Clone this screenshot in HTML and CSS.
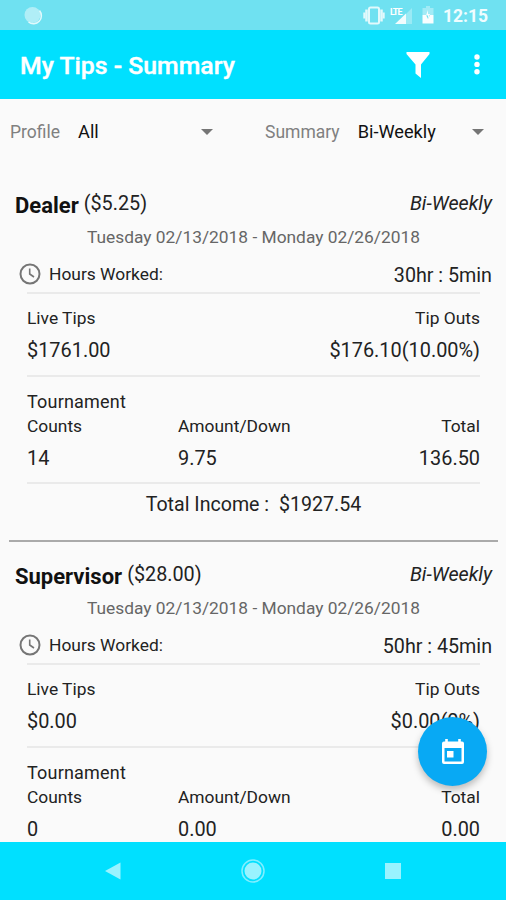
FILE: index.html
```html
<!DOCTYPE html>
<html lang="en">
<head>
  <meta charset="UTF-8" />
  <meta name="viewport" content="width=device-width, initial-scale=1.0" />
  <title>My Tips - Summary</title>
  <link rel="stylesheet" href="styles.css">
</head>
<body>
  <div class="screen">
    <div class="status-bar">
      <svg class="status-sync" width="20" height="20" viewBox="0 0 20 20">
        <circle cx="9.500" cy="9" r="8" fill="#fff" fill-opacity=".45" />
        <path d="M16.500 4.500A8 8 0 0 1 5.500 16" fill="none" stroke="#fff" stroke-opacity=".8" stroke-width="1.500" />
      </svg>
      <div class="status-icons">
        <svg width="22" height="20" viewBox="0 0 22 20" fill="none" stroke="#fff" stroke-opacity=".8">
          <rect x="6" y="1.500" width="10" height="16" rx="1.500" stroke-width="2" />
          <path d="M3.500 3.500v12M18.500 3.500v12" stroke-width="2.500" />
          <path d="M1.300 6.500v6M20.700 6.500v6" stroke-width="2" />
        </svg>
        <svg class="signal" width="24" height="20" viewBox="0 0 24 20" fill="#fff">
          <path d="M22 2v16h-6V8z" fill-opacity=".3" />
          <path d="M16 7.500V18H5z" fill-opacity=".9" />
          <text class="lte" x="0" y="8.500">LTE</text>
        </svg>
        <svg class="battery" width="12" height="19" viewBox="0 0 12 19" fill="#fff">
          <path d="M4 0h4v2h3.500v7H.5V2H4z" fill-opacity=".35" />
          <path d="M.5 9H4l2 4 2-4h3.500v8.500H.5z" fill-opacity=".95" />
          <path d="M6 4L4 9.500h2V13l2-5H6z" fill-opacity=".9" />
        </svg>
        <span class="clock">12:15</span>
      </div>
    </div>

    <div class="app-bar">
      <h1>My Tips - Summary</h1>
      <svg class="filter" width="24" height="26" viewBox="0 0 24 26" fill="#fff">
        <path d="M.5 0h23v2L15 12.500V26l-5.500-4.500v-9L.5 2z" />
      </svg>
      <svg class="more" width="8" height="22" viewBox="0 0 8 22" fill="#fff">
        <circle cx="4" cy="3" r="2.700" />
        <circle cx="4" cy="10.400" r="2.700" />
        <circle cx="4" cy="17.800" r="2.700" />
      </svg>
    </div>

    <div class="filters">
      <div class="select profile">
        <span class="label">Profile</span>
        <span class="value">All</span>
        <span class="arrow"></span>
      </div>
      <div class="select summary">
        <span class="label">Summary</span>
        <span class="value">Bi-Weekly</span>
        <span class="arrow"></span>
      </div>
    </div>

    <div class="list">
      <div class="card">
        <div class="card-header">
          <div class="title"><span class="job">Dealer</span><span class="rate">($5.25)</span></div>
          <span class="period">Bi-Weekly</span>
        </div>
        <div class="dates">Tuesday 02/13/2018 - Monday 02/26/2018</div>
        <div class="hours">
          <svg width="22" height="22" viewBox="0 0 22 22" fill="none" stroke="#757575" stroke-width="2">
            <circle cx="11" cy="11" r="9.500" />
            <path d="M10.700 5.500V11l4.300 3" stroke-width="1.600" />
          </svg>
          <span class="hours-label">Hours Worked:</span>
          <span class="hours-value">30hr : 5min</span>
        </div>
        <div class="tips">
          <div class="row small"><span>Live Tips</span><span>Tip Outs</span></div>
          <div class="row amounts"><span>$1761.00</span><span>$176.10(10.00%)</span></div>
        </div>
        <div class="tournament">
          <div class="tournament-title">Tournament</div>
          <div class="grid small"><span>Counts</span><span>Amount/Down</span><span>Total</span></div>
          <div class="grid values"><span>14</span><span>9.75</span><span>136.50</span></div>
        </div>
        <div class="income"><span>Total Income :</span><span>$1927.54</span></div>
      </div>

      <div class="card">
        <div class="card-header">
          <div class="title"><span class="job">Supervisor</span><span class="rate">($28.00)</span></div>
          <span class="period">Bi-Weekly</span>
        </div>
        <div class="dates">Tuesday 02/13/2018 - Monday 02/26/2018</div>
        <div class="hours">
          <svg width="22" height="22" viewBox="0 0 22 22" fill="none" stroke="#757575" stroke-width="2">
            <circle cx="11" cy="11" r="9.500" />
            <path d="M10.700 5.500V11l4.300 3" stroke-width="1.600" />
          </svg>
          <span class="hours-label">Hours Worked:</span>
          <span class="hours-value">50hr : 45min</span>
        </div>
        <div class="tips">
          <div class="row small"><span>Live Tips</span><span>Tip Outs</span></div>
          <div class="row amounts"><span>$0.00</span><span>$0.00(0%)</span></div>
        </div>
        <div class="tournament">
          <div class="tournament-title">Tournament</div>
          <div class="grid small"><span>Counts</span><span>Amount/Down</span><span>Total</span></div>
          <div class="grid values"><span>0</span><span>0.00</span><span>0.00</span></div>
        </div>
      </div>
    </div>

    <button class="fab" aria-label="Calendar">
      <svg width="24" height="26" viewBox="0 0 24 26">
        <path d="M5.500 0v4M18.500 0v4" stroke="#fff" stroke-width="2.600" />
        <path d="M3 2.500h18a2 2 0 0 1 2 2V23a2 2 0 0 1-2 2H3a2 2 0 0 1-2-2V4.500a2 2 0 0 1 2-2zM3.500 9v13.500h17V9z" fill="#fff" fill-rule="evenodd" />
        <path d="M6 12h6.500v6.500H6z" fill="#fff" />
      </svg>
    </button>

    <div class="nav-bar">
      <svg width="16" height="18" viewBox="0 0 16 18"><path d="M0 9L15.500.5v17z" fill="#99f3ff" /></svg>
      <svg width="24" height="24" viewBox="0 0 24 24">
        <circle cx="12" cy="12" r="11" fill="none" stroke="#80eeff" stroke-width="1.500" />
        <circle cx="12" cy="12" r="8.500" fill="#99f3ff" />
      </svg>
      <svg width="16" height="16" viewBox="0 0 16 16"><path d="M0 0h16v16H0z" fill="#99f3ff" /></svg>
    </div>
  </div>
</body>
</html>
```

FILE: styles.css
```css
* {
  box-sizing: border-box;
}
body {
  margin: 0;
  font-family: Roboto, sans-serif;
  color: #222;
  background: #fafafa;
}
.screen {
  position: relative;
  display: flex;
  flex-direction: column;
  width: 506px;
  height: 900px;
  overflow: hidden;
}
.status-bar {
  flex: none;
  display: flex;
  justify-content: space-between;
  align-items: center;
  height: 30px;
  padding: 1px 18px 0 23px;
  background: #6fe1f1;
}
.status-icons {
  display: flex;
  align-items: center;
  margin-left: auto;
}
.signal {
  margin-left: 5px;
}
.lte {
  font-size: 9px;
  font-weight: bold;
  letter-spacing: -1px;
}
.battery {
  margin: 0 9px 0 8px;
}
.clock {
  font-size: 17.500px;
  font-weight: 700;
  color: #f0fdff;
}
.app-bar {
  flex: none;
  display: flex;
  align-items: center;
  height: 69px;
  padding: 0 25px 0 20px;
  background: #00e0ff;
}
h1 {
  flex: 1;
  margin: 2px 0 0;
  font-size: 24.800px;
  font-weight: 500;
  color: #fff;
  -webkit-text-stroke: 0.4px #fff;
}
.filter {
  margin-right: 43px;
}
.filters {
  flex: none;
  display: flex;
  height: 65px;
  padding: 0 22px 0 10px;
  font-size: 17.500px;
}
.select {
  display: flex;
  align-items: center;
}
.profile {
  width: 203px;
  margin-right: 52px;
}
.summary {
  flex: 1;
}
.label {
  color: #808080;
}
.value {
  flex: 1;
  margin-left: 18px;
  font-size: 18.200px;
  color: #111;
}
.arrow {
  border: 6px solid transparent;
  border-top-color: #757575;
  border-bottom: 0;
}
.list {
  flex: 1;
  min-height: 0;
  overflow: hidden;
  padding: 7px 8px 0 9px;
}
.card {
  height: 371px;
  padding: 13px 6px 0;
  border-bottom: 2px solid #aaa;
}
.card-header {
  display: flex;
  justify-content: space-between;
  align-items: center;
  height: 39px;
}
.title {
  display: flex;
  align-items: center;
}
.job {
  margin: 3px 5px 0 0;
  font-size: 22px;
  font-weight: 700;
  color: #111;
}
.rate {
  font-size: 19.800px;
}
.period {
  font-size: 19.700px;
  font-style: italic;
}
.dates {
  height: 28px;
  line-height: 28px;
  font-size: 17.350px;
  text-align: center;
  color: #666;
}
.hours {
  display: flex;
  align-items: center;
  height: 41px;
  padding: 4px 0 0 4px;
}
.hours-label {
  flex: 1;
  margin-left: 8px;
  font-size: 17.400px;
}
.hours-value {
  margin-top: 3px;
  font-size: 19.700px;
}
.tips,
.tournament {
  margin: 0 12px;
  border-top: 2px solid #eaeaea;
}
.tips {
  height: 83px;
  padding-top: 10px;
}
.tournament {
  height: 109px;
  padding-top: 11px;
  border-bottom: 2px solid #eaeaea;
}
.row {
  display: flex;
  justify-content: space-between;
}
.grid {
  display: grid;
  grid-template-columns: 1fr 1fr 1fr;
}
.grid span:last-child {
  text-align: right;
}
.small {
  height: 28px;
  line-height: 28px;
  font-size: 17.400px;
}
.tournament-title {
  height: 24px;
  line-height: 28px;
  font-size: 18px;
  letter-spacing: 0.2px;
}
.amounts,
.values {
  line-height: 38px;
  font-size: 19.900px;
}
.income {
  display: flex;
  justify-content: center;
  gap: 10px;
  line-height: 41px;
  font-size: 19.600px;
}
.fab {
  position: absolute;
  right: 19px;
  bottom: 114px;
  display: flex;
  justify-content: center;
  align-items: center;
  width: 69px;
  height: 69px;
  padding: 0;
  border: none;
  border-radius: 50%;
  background: #08a9f4;
  box-shadow: 0 4px 7px rgba(0, 0, 0, 0.25);
}
.nav-bar {
  flex: none;
  display: flex;
  justify-content: space-between;
  align-items: center;
  height: 58px;
  padding: 0 105px;
  background: #00e0ff;
}
```
